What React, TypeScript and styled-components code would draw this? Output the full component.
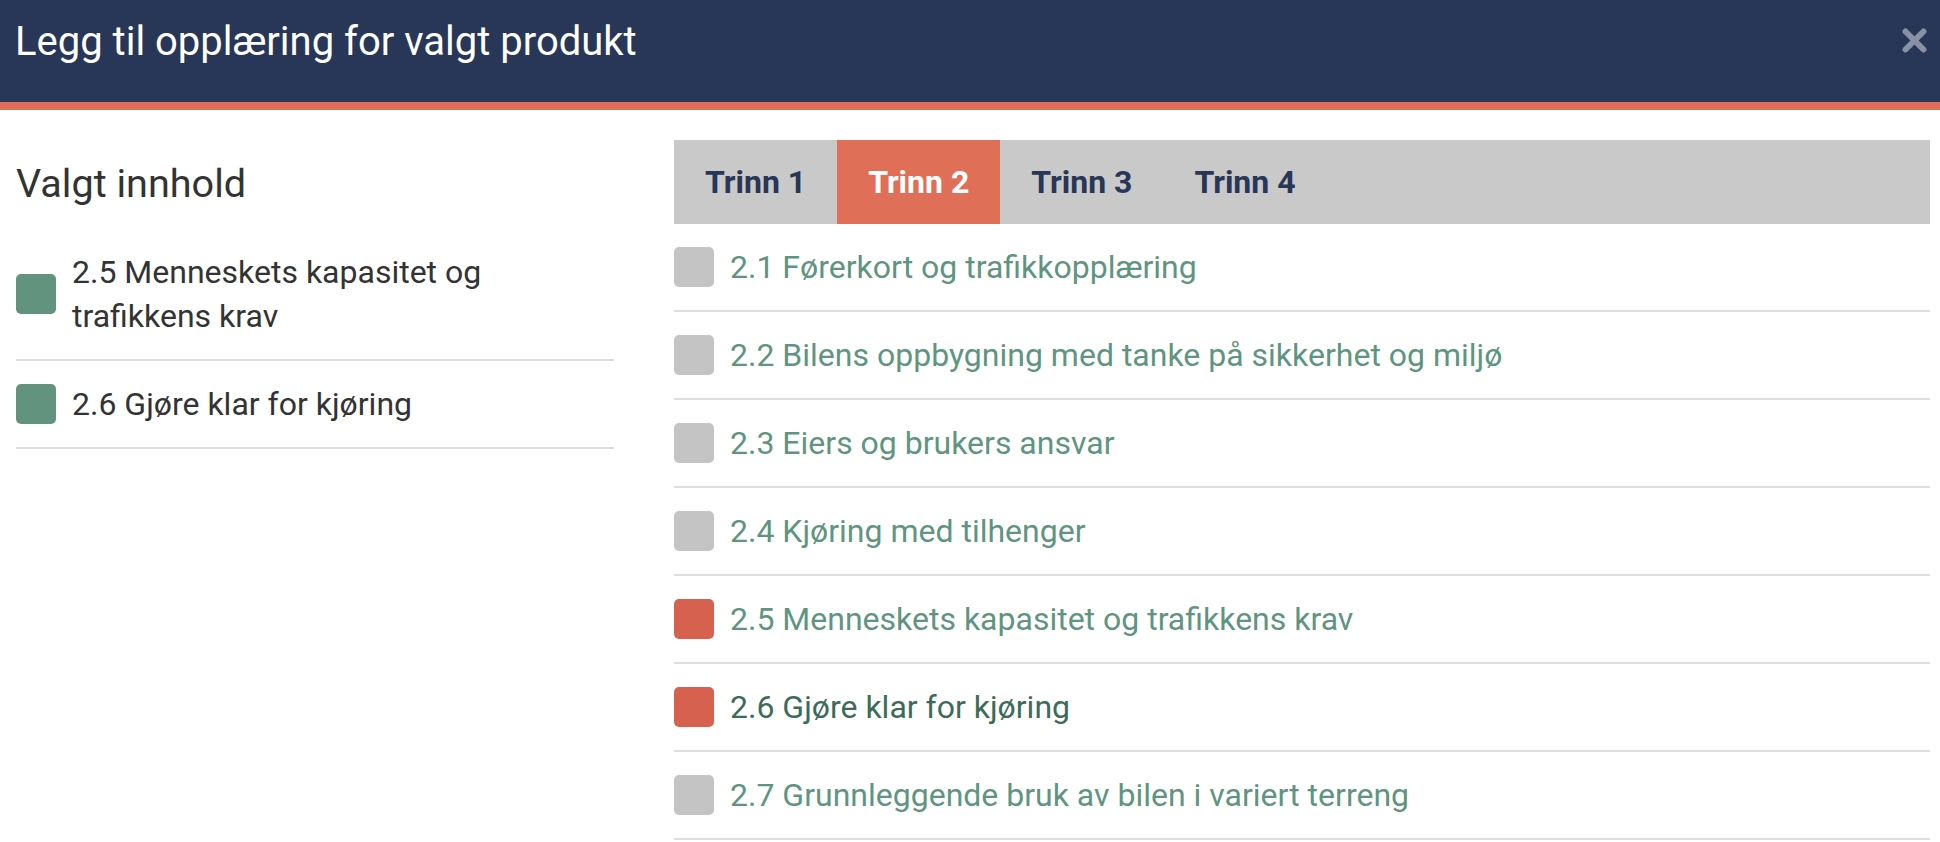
import React from "react";
import styled, { createGlobalStyle, css } from "styled-components";

const GlobalStyle = createGlobalStyle`
  html, body {
    margin: 0;
    padding: 0;
    background: #ffffff;
    font-family: Roboto, "Liberation Sans", Arial, sans-serif;
  }
  * { box-sizing: border-box; }
`;

const NAVY = "#283657";
const ORANGE = "#e06f58";

const Modal = styled.div`
  width: 100%;
  background: #ffffff;
`;

const Header = styled.header`
  height: 110px;
  background: ${NAVY};
  border-bottom: 8px solid ${ORANGE};
  display: flex;
  align-items: flex-start;
  justify-content: space-between;
  padding: 20px 13px 0 15px;
`;

const Title = styled.h1`
  margin: 0;
  font-size: 40px;
  line-height: 44px;
  font-weight: 400;
  color: #ffffff;
`;

const CloseButton = styled.button`
  margin-top: 8px;
  width: 25px;
  height: 25px;
  padding: 0;
  border: 0;
  background: transparent;
  display: flex;
  cursor: pointer;
`;

const Body = styled.div`
  display: grid;
  grid-template-columns: 598px 1fr;
  column-gap: 60px;
  padding: 30px 10px 0 16px;
`;

const Column = styled.section`
  display: flex;
  flex-direction: column;
  min-width: 0;
`;

const Heading = styled.h4`
  margin: 22px 0 24px;
  font-size: 39.6px;
  line-height: 43px;
  font-weight: 400;
  color: #333333;
`;

const List = styled.ul`
  list-style: none;
  margin: 0;
  padding: 0;
`;

const Row = styled.li`
  display: flex;
  align-items: center;
  gap: 16px;
  padding: 21px 0;
  border-bottom: 2px solid #dddddd;
  font-size: 32px;
  line-height: 44px;
`;

type BoxVariant = "gray" | "red" | "green";

const boxColors: Record<BoxVariant, string> = {
  gray: "#c4c4c4",
  red: "#d6614f",
  green: "#62937e",
};

const Box = styled.span<{ $variant: BoxVariant }>`
  flex: 0 0 40px;
  width: 40px;
  height: 40px;
  border-radius: 5px;
  background: ${(p) => boxColors[p.$variant]};
`;

const ItemText = styled.span<{ $tone: "dark" | "green" | "deep" }>`
  color: ${(p) =>
    p.$tone === "dark" ? "#333333" : p.$tone === "deep" ? "#3e6b59" : "#5f9580"};
`;

const TabBar = styled.nav`
  display: flex;
  height: 84px;
  background: #c9c9c9;
`;

const Tab = styled.button<{ $active?: boolean }>`
  display: flex;
  align-items: center;
  padding: 0 31px;
  border: 0;
  margin: 0;
  font-family: inherit;
  font-size: 32px;
  font-weight: 700;
  color: ${NAVY};
  background: transparent;
  cursor: pointer;
  ${(p) =>
    p.$active &&
    css`
      background: ${ORANGE};
      color: #ffffff;
    `}
`;

const selected = [
  "2.5 Menneskets kapasitet og trafikkens krav",
  "2.6 Gjøre klar for kjøring",
];

const items: { label: string; box: BoxVariant; tone: "green" | "deep" }[] = [
  { label: "2.1 Førerkort og trafikkopplæring", box: "gray", tone: "green" },
  { label: "2.2 Bilens oppbygning med tanke på sikkerhet og miljø", box: "gray", tone: "green" },
  { label: "2.3 Eiers og brukers ansvar", box: "gray", tone: "green" },
  { label: "2.4 Kjøring med tilhenger", box: "gray", tone: "green" },
  { label: "2.5 Menneskets kapasitet og trafikkens krav", box: "red", tone: "green" },
  { label: "2.6 Gjøre klar for kjøring", box: "red", tone: "deep" },
  { label: "2.7 Grunnleggende bruk av bilen i variert terreng", box: "gray", tone: "green" },
];

const tabs = ["Trinn 1", "Trinn 2", "Trinn 3", "Trinn 4"];

export default function App() {
  return (
    <>
      <GlobalStyle />
      <Modal>
        <Header>
          <Title>Legg til opplæring for valgt produkt</Title>
          <CloseButton aria-label="Lukk">
            <svg width="25" height="25" viewBox="0 0 25 25">
              <path
                d="M3.5 3.5 L21.5 21.5 M21.5 3.5 L3.5 21.5"
                stroke="#8891a6"
                strokeWidth="6"
                strokeLinecap="round"
                fill="none"
              />
            </svg>
          </CloseButton>
        </Header>
        <Body>
          <Column>
            <Heading>Valgt innhold</Heading>
            <List>
              {selected.map((s) => (
                <Row key={s}>
                  <Box $variant="green" />
                  <ItemText $tone="dark">{s}</ItemText>
                </Row>
              ))}
            </List>
          </Column>
          <Column>
            <TabBar>
              {tabs.map((t, i) => (
                <Tab key={t} $active={i === 1}>
                  {t}
                </Tab>
              ))}
            </TabBar>
            <List>
              {items.map((it) => (
                <Row key={it.label}>
                  <Box $variant={it.box} />
                  <ItemText $tone={it.tone}>{it.label}</ItemText>
                </Row>
              ))}
            </List>
          </Column>
        </Body>
      </Modal>
    </>
  );
}
